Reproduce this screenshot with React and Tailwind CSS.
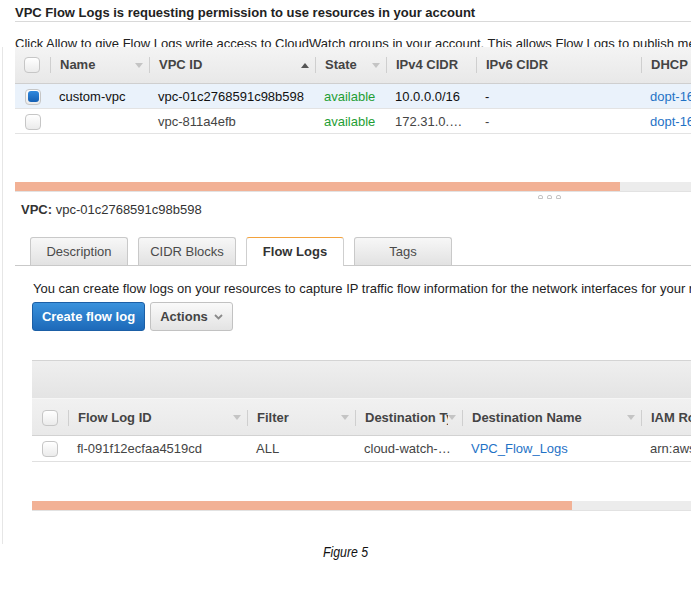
import React from 'react';

const vpcCols = [
  { label: 'Name', w: 'w-[99px]', arrow: 'down' },
  { label: 'VPC ID', w: 'w-[166px]', arrow: 'up' },
  { label: 'State', w: 'w-[71px]', arrow: 'down' },
  { label: 'IPv4 CIDR', w: 'w-[90px]', cut: true },
  { label: 'IPv6 CIDR', w: 'w-[165px]' },
  { label: 'DHCP options set', w: 'w-[140px]' },
];

const vpcRows = [
  { selected: true, cells: ['custom-vpc', 'vpc-01c2768591c98b598', 'available', '10.0.0.0/16', '-', 'dopt-16e3d86d'] },
  { selected: false, cells: ['', 'vpc-811a4efb', 'available', '172.31.0.0/16', '-', 'dopt-16e3d86d'] },
];

const logCols = [
  { label: 'Flow Log ID', w: 'w-[179px]', arrow: 'down' },
  { label: 'Filter', w: 'w-[108px]', arrow: 'down' },
  { label: 'Destination Type', w: 'w-[107px]', arrow: 'down', cut: true },
  { label: 'Destination Name', w: 'w-[179px]', arrow: 'down' },
  { label: 'IAM Role', w: 'w-[140px]' },
];

const logRow = ['fl-091f12ecfaa4519cd', 'ALL', 'cloud-watch-logs', 'VPC_Flow_Logs', 'arn:aws:iam::123456789012:role/flowlogsRole'];

function Checkbox({ checked }) {
  return (
    <span className="flex h-[16px] w-[16px] shrink-0 items-center justify-center rounded-[4px] border border-[#c6c6c6] bg-linear-to-b from-white to-[#ebebeb]">
      {checked && <span className="h-[11px] w-[11px] rounded-[3px] bg-linear-to-b from-[#3089de] to-[#1560b4]" />}
    </span>
  );
}

function SortArrow({ dir }) {
  if (!dir) return null;
  return (
    <svg width="8" height="5" viewBox="0 0 8 5" className="mr-[6px] shrink-0">
      {dir === 'up' ? (
        <polygon points="0,5 8,5 4,0" fill="#555" />
      ) : (
        <polygon points="0,0 8,0 4,5" fill="#c4c4c4" />
      )}
    </svg>
  );
}

function HeadCell({ col }) {
  return (
    <div className={`${col.w} flex h-full shrink-0 items-center`}>
      <span className="h-[16px] w-px shrink-0 bg-[#cfcfcf]" />
      <span className="min-w-0 flex-1 overflow-hidden whitespace-nowrap pl-[9px] font-bold text-[#444]">{col.label}</span>
      <SortArrow dir={col.arrow} />
    </div>
  );
}

function Scrollbar({ fill }) {
  return (
    <div className="flex h-[10px] w-[800px] border-b border-[#e2e2e2] bg-[#ececec]">
      <div className={`${fill} h-full bg-[#f2b195]`} />
    </div>
  );
}

export default function App() {
  return (
    <div className="relative h-[592px] w-[691px] overflow-hidden bg-white font-['Liberation_Sans',Arial,sans-serif] text-[13px] text-[#333]">
      {/* permission heading */}
      <div className="ml-[15px] w-[900px] border-b border-[#d9d9d9] pt-[4px] leading-[17px]">
        <span className="font-bold text-[#222]">VPC Flow Logs is requesting permission to use resources in your account</span>
      </div>
      <div className="ml-[15px] mt-[14px] h-[11px] overflow-hidden whitespace-nowrap leading-[15px] text-[#222]">
        Click Allow to give Flow Logs write access to CloudWatch groups in your account. This allows Flow Logs to publish metrics and log data.
      </div>

      {/* console panel */}
      <div className="ml-[2px] h-[497px] w-[900px] border-l border-[#e6e6e6] pl-[12px]">
        {/* VPC table */}
        <div className="flex h-[37px] border-b border-[#cfcfcf] bg-linear-to-b from-[#f4f4f4] to-[#e8e8e8]">
          <div className="flex w-[35px] shrink-0 items-center pl-[9px]">
            <Checkbox />
          </div>
          {vpcCols.map((c) => (
            <HeadCell key={c.label} col={c} />
          ))}
        </div>
        {vpcRows.map((r, i) => (
          <div key={i} className={`flex h-[25px] items-center border-b border-[#e3e3e3] pt-px ${r.selected ? 'bg-[#eaf2fb] text-[#111]' : 'bg-white text-[#444]'}`}>
            <div className="flex w-[35px] shrink-0 items-center pl-[10px]">
              <Checkbox checked={r.selected} />
            </div>
            {r.cells.map((cell, j) => (
              <div
                key={j}
                className={`${vpcCols[j].w} shrink-0 whitespace-nowrap pl-[9px] ${vpcCols[j].cut ? 'truncate pr-[10px]' : ''} ${j === 2 ? 'text-[#1f9e35]' : ''} ${j === 5 ? 'text-[#1f72c6]' : ''}`}
              >
                {cell}
              </div>
            ))}
          </div>
        ))}

        <div className="mt-[48px]">
          <Scrollbar fill="w-[605px]" />
        </div>
        <div className="flex h-[10px] items-center gap-[4px] pl-[523px]">
          <span className="h-[4px] w-[5px] rounded-t-[2px] border border-[#c4c4c4]" />
          <span className="h-[4px] w-[5px] rounded-t-[2px] border border-[#c4c4c4]" />
          <span className="h-[4px] w-[5px] rounded-t-[2px] border border-[#c4c4c4]" />
        </div>

        <div className="pl-[6px] leading-[16px] text-[#333]">
          <span className="font-bold">VPC:</span> vpc-01c2768591c98b598
        </div>

        {/* tabs */}
        <div className="mt-[19px] flex h-[29px] items-end gap-[10px] border-b border-[#c9c9c9] pl-[15px]">
          {['Description', 'CIDR Blocks', 'Flow Logs', 'Tags'].map((t) =>
            t === 'Flow Logs' ? (
              <div
                key={t}
                className="-mb-px flex h-[29px] w-[98px] items-center justify-center rounded-t-[3px] border border-b-0 border-[#cfcfcf] border-t-[#f3a23d] bg-white font-bold text-[#333]"
              >
                {t}
              </div>
            ) : (
              <div
                key={t}
                className="flex h-[28px] w-[98px] items-center justify-center rounded-t-[3px] border border-b-0 border-[#c9c9c9] bg-linear-to-b from-[#f7f7f7] to-[#e2e2e2] text-[#4a4a4a]"
              >
                {t}
              </div>
            )
          )}
        </div>

        <div className="mt-[15px] whitespace-nowrap pl-[18px] leading-[16px] text-[#222]">
          You can create flow logs on your resources to capture IP traffic flow information for the network interfaces for your resources.
        </div>

        <div className="mt-[5px] flex gap-[5px] pl-[17px]">
          <button className="h-[29px] w-[113px] rounded-[3px] border border-[#1b5fa6] bg-linear-to-b from-[#3a92dc] to-[#1d69b9] font-bold text-white">
            Create flow log
          </button>
          <button className="flex h-[29px] w-[83px] items-center justify-center gap-[6px] rounded-[3px] border border-[#c2c2c2] bg-linear-to-b from-[#fafafa] to-[#e3e3e3] font-bold text-[#444]">
            Actions
            <svg width="9" height="6" viewBox="0 0 9 6">
              <polyline points="1,1 4.5,4.5 8,1" fill="none" stroke="#8a8a8a" strokeWidth="1.8" />
            </svg>
          </button>
        </div>

        {/* flow logs table */}
        <div className="ml-[17px] mt-[29px]">
          <div className="h-[38px] border-t border-[#d4d4d4] bg-linear-to-b from-[#efefef] to-[#e4e4e4]" />
          <div className="flex h-[38px] border-t border-b border-t-[#f6f6f6] border-b-[#d2d2d2] bg-linear-to-b from-[#f1f1f1] to-[#e9e9e9] pt-px">
            <div className="flex w-[36px] shrink-0 items-center pl-[10px]">
              <Checkbox />
            </div>
            {logCols.map((c) => (
              <HeadCell key={c.label} col={c} />
            ))}
          </div>
          <div className="flex h-[26px] items-center border-b border-[#e0e0e0] pt-px text-[#444]">
            <div className="flex w-[36px] shrink-0 items-center pl-[10px]">
              <Checkbox />
            </div>
            {logRow.map((cell, j) => (
              <div
                key={j}
                className={`${logCols[j].w} shrink-0 whitespace-nowrap pl-[9px] ${logCols[j].cut ? 'truncate pr-[10px]' : 'overflow-hidden'} ${j === 3 ? 'text-[#1f72c6]' : ''}`}
              >
                {cell}
              </div>
            ))}
          </div>
          <div className="mt-[39px]">
            <Scrollbar fill="w-[540px]" />
          </div>
        </div>
      </div>

      <div className="text-center leading-[16px]">
        <span className="inline-block origin-center scale-x-[0.82] font-['Liberation_Sans',Arial,sans-serif] text-[15px] italic text-[#111]">
          Figure 5
        </span>
      </div>
    </div>
  );
}
